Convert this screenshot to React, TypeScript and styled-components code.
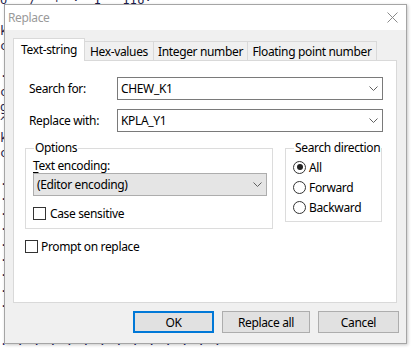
import React from "react";
import styled, { createGlobalStyle } from "styled-components";

const Global = createGlobalStyle`
  html, body { margin: 0; padding: 0; background: #fff; }
  body { font-family: "Noto Sans", "Segoe UI", sans-serif; font-size: 12px; letter-spacing: -0.35px; color: #000; }
  * { box-sizing: border-box; }
`;

const Screen = styled.div`
  position: relative;
  width: 414px;
  height: 351px;
  overflow: hidden;
  background: #fff;
`;

const Backdrop = styled.div`
  display: flex;
  flex-direction: column;
  margin-top: -7px;
  font-family: "DejaVu Sans Mono", monospace;
  font-size: 12px;
  letter-spacing: 0;
  line-height: 15.3px;
  color: #1c1c4c;
  white-space: pre;
`;

const BackLine = styled.div`
  height: 15.3px;
`;

const DotLine = styled.div`
  position: absolute;
  left: 0;
  top: 336px;
  font-family: "DejaVu Sans Mono", monospace;
  font-size: 12px;
  line-height: 16px;
  color: #1c1c6c;
  letter-spacing: 1px;
  white-space: pre;
`;

const Window = styled.div`
  position: absolute;
  left: 4px;
  top: 4px;
  width: 403px;
  height: 340px;
  border: 1px solid #a5a5a5;
  background: #f0f0f0;
  display: flex;
  flex-direction: column;
  box-shadow: 1px 1px 3px rgba(0, 0, 0, 0.22);
`;

const TitleBar = styled.div`
  height: 25px;
  background: #fff;
  display: flex;
  align-items: center;
  justify-content: space-between;
  padding: 0 8px 0 3px;
  color: #9a9a9a;
  font-size: 12px;
`;

const Body = styled.div`
  flex: 1;
  display: flex;
  flex-direction: column;
  padding: 8px 0 0 8px;
`;

const TabBar = styled.div`
  display: flex;
  align-items: flex-end;
  height: 22px;
`;

const Tab = styled.div<{ $w: number; $active?: boolean }>`
  position: relative;
  z-index: ${(p) => (p.$active ? 2 : 1)};
  width: ${(p) => p.$w}px;
  height: ${(p) => (p.$active ? 23 : 19)}px;
  margin-bottom: ${(p) => (p.$active ? -1 : 0)}px;
  margin-left: -1px;
  &:first-child { margin-left: 0; }
  border: 1px solid #d9d9d9;
  border-bottom: none;
  background: ${(p) => (p.$active ? "#fff" : "#f0f0f0")};
  display: flex;
  align-items: center;
  justify-content: center;
  padding-bottom: ${(p) => (p.$active ? 2 : 0)}px;
  white-space: nowrap;
`;

const Panel = styled.div`
  width: 384px;
  height: 243px;
  background: #fff;
  border: 1px solid #d9d9d9;
  display: flex;
  flex-direction: column;
  padding: 16px 13px 0 15px;
`;

const FieldRow = styled.div<{ $mt?: number }>`
  display: flex;
  align-items: center;
  margin-top: ${(p) => p.$mt ?? 0}px;
`;

const FieldLabel = styled.span`
  width: 88px;
`;

const Combo = styled.div<{ $w: number; $grey?: boolean }>`
  width: ${(p) => p.$w}px;
  height: 23px;
  border: 1px solid ${(p) => (p.$grey ? "#adadad" : "#7a7a7a")};
  background: ${(p) => (p.$grey ? "#e5e5e5" : "#fff")};
  display: flex;
  align-items: center;
  justify-content: space-between;
  padding: 0 4px 0 3px;
`;

const Groups = styled.div`
  display: flex;
  align-items: flex-start;
  gap: 12px;
  margin: 8px 0 0 -4px;
`;

const Group = styled.fieldset<{ $w: number; $h: number }>`
  width: ${(p) => p.$w}px;
  height: ${(p) => p.$h}px;
  margin: 0;
  border: 1px solid #dcdcdc;
  padding: 0 0 0 7px;
  display: flex;
  flex-direction: column;
  min-width: 0;
`;

const Legend = styled.legend`
  padding: 0 1px;
  margin-left: 1px;
  line-height: 16px;
  height: 16px;
  white-space: nowrap;
`;

const Caption = styled.div`
  line-height: 14px;
  margin-top: 3px;
`;

const Key = styled.span`
  text-decoration: underline;
  text-underline-offset: 2px;
`;

const CheckRow = styled.div<{ $mt?: number; $gap: number; $ml?: number }>`
  display: flex;
  align-items: center;
  gap: ${(p) => p.$gap}px;
  height: 20px;
  margin-top: ${(p) => p.$mt ?? 0}px;
  margin-left: ${(p) => p.$ml ?? 0}px;
`;

const Box = styled.span`
  width: 13px;
  height: 13px;
  border: 1px solid #333;
  background: #fff;
  flex: none;
`;

const Radio = styled.span<{ $on?: boolean }>`
  width: 13px;
  height: 13px;
  border: 1px solid #333;
  border-radius: 50%;
  background: #fff;
  flex: none;
  display: flex;
  align-items: center;
  justify-content: center;
  &::after {
    content: "";
    width: 6px;
    height: 6px;
    border-radius: 50%;
    background: ${(p) => (p.$on ? "#222" : "transparent")};
  }
`;

const ButtonRow = styled.div`
  display: flex;
  justify-content: flex-end;
  gap: 8px;
  padding-right: 7px;
  margin-top: 8px;
`;

const Button = styled.div<{ $w: number; $default?: boolean }>`
  width: ${(p) => p.$w}px;
  height: 22px;
  background: #e1e1e1;
  border: ${(p) => (p.$default ? "2px solid #0078d7" : "1px solid #adadad")};
  display: flex;
  align-items: center;
  justify-content: center;
`;

const Chevron = () => (
  <svg width="9" height="5" viewBox="0 0 9 5">
    <path d="M0.5 0.5 L4.5 4.5 L8.5 0.5" fill="none" stroke="#606060" strokeWidth="1" />
  </svg>
);

const CloseIcon = () => (
  <svg width="11" height="11" viewBox="0 0 11 11">
    <path d="M0.5 0.5 L10.5 10.5 M10.5 0.5 L0.5 10.5" stroke="#8a8a8a" strokeWidth="1" />
  </svg>
);

const backLines = ["o   /  ¬  ·  Ĭ   ĪĪŪ·", "", "k", "c", "", "·", "c", "g", "^", "k", "c", "", "·", "·", "·", "·", "·", "·", "·", "·", "·"];

export default function App() {
  return (
    <Screen>
      <Global />
      <Backdrop>
        {backLines.map((t, i) => (
          <BackLine key={i}>{t}</BackLine>
        ))}
      </Backdrop>
      <DotLine>{"· · · · · · · · · · · · · ·"}</DotLine>
      <Window>
        <TitleBar>
          <span>Replace</span>
          <CloseIcon />
        </TitleBar>
        <Body>
          <TabBar>
            <Tab $w={72} $active>Text-string</Tab>
            <Tab $w={70}>Hex-values</Tab>
            <Tab $w={95}>Integer number</Tab>
            <Tab $w={130}>Floating point number</Tab>
          </TabBar>
          <Panel>
            <FieldRow>
              <FieldLabel>Search for:</FieldLabel>
              <Combo $w={266}>
                <span>CHEW_K1</span>
                <Chevron />
              </Combo>
            </FieldRow>
            <FieldRow $mt={9}>
              <FieldLabel>Replace with:</FieldLabel>
              <Combo $w={266}>
                <span>KPLA_Y1</span>
                <Chevron />
              </Combo>
            </FieldRow>
            <Groups>
              <Group $w={248} $h={89}>
                <Legend>Options</Legend>
                <Caption>
                  <Key>T</Key>ext encoding:
                </Caption>
                <Combo $w={234} $grey>
                  <span>(Editor encoding)</span>
                  <Chevron />
                </Combo>
                <CheckRow $gap={4} $mt={7}>
                  <Box />
                  <span>Case sensitive</span>
                </CheckRow>
              </Group>
              <Group $w={97} $h={82}>
                <Legend>Search direction</Legend>
                <CheckRow $gap={3} $mt={1}>
                  <Radio $on />
                  <span>All</span>
                </CheckRow>
                <CheckRow $gap={3}>
                  <Radio />
                  <span>Forward</span>
                </CheckRow>
                <CheckRow $gap={3}>
                  <Radio />
                  <span>Backward</span>
                </CheckRow>
              </Group>
            </Groups>
            <CheckRow $gap={3} $mt={7} $ml={-4}>
              <Box />
              <span>Prompt on replace</span>
            </CheckRow>
          </Panel>
          <ButtonRow>
            <Button $w={81} $default>OK</Button>
            <Button $w={88}>Replace all</Button>
            <Button $w={81}>Cancel</Button>
          </ButtonRow>
        </Body>
      </Window>
    </Screen>
  );
}
